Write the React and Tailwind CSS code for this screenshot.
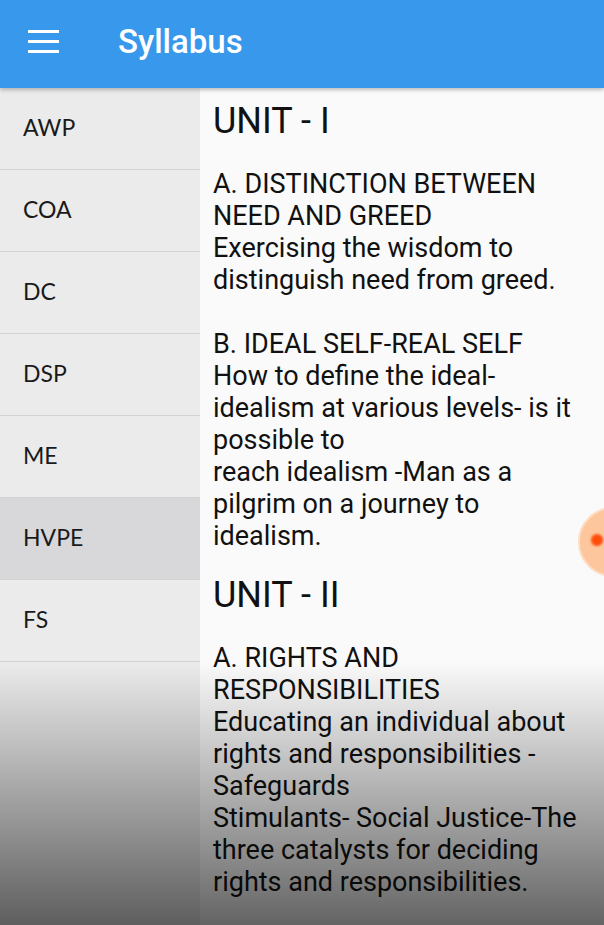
import React from 'react';

const subjects = ['AWP', 'COA', 'DC', 'DSP', 'ME', 'HVPE', 'FS'];

const units = [
  {
    title: 'UNIT - I',
    body:
      'A. DISTINCTION BETWEEN NEED AND GREED\nExercising the wisdom to distinguish need from greed.\n\nB. IDEAL SELF-REAL SELF\nHow to define the ideal-idealism at various levels- is it possible to\nreach idealism -Man as a pilgrim on a journey to idealism.',
  },
  {
    title: 'UNIT - II',
    body:
      'A. RIGHTS AND RESPONSIBILITIES\nEducating an individual about rights and responsibilities - Safeguards\nStimulants- Social Justice-The three catalysts for deciding rights and responsibilities.',
  },
];

function Hamburger() {
  return (
    <svg width="31" height="23" viewBox="0 0 31 23" className="block">
      <rect x="0" y="0" width="31" height="3" fill="white" />
      <rect x="0" y="10" width="31" height="3" fill="white" />
      <rect x="0" y="20" width="31" height="3" fill="white" />
    </svg>
  );
}

export default function App() {
  const selected = 'HVPE';

  return (
    <div className="relative w-[604px] h-[925px] overflow-hidden bg-[#fafafa] flex flex-col font-['Roboto',sans-serif]">
      {/* top bar */}
      <header className="relative z-10 h-[88px] shrink-0 bg-[#3898ec] flex items-center pb-[5px] shadow-[0_2px_4px_rgba(0,0,0,0.25)]">
        <div className="ml-[28px] w-[31px]">
          <Hamburger />
        </div>
        <h1 className="ml-[59px] text-white text-[33px] font-medium leading-none">Syllabus</h1>
      </header>

      <div className="flex flex-1 min-h-0">
        {/* subject list */}
        <aside className="w-[200px] shrink-0 bg-[#ebebeb]">
          {subjects.map((s) => (
            <div
              key={s}
              className={
                'h-[82px] flex items-center pl-[23px] pb-[2px] border-b border-[#d2d2d2] text-[23px] text-[#1a1a1a] font-["Lato",sans-serif] ' +
                (s === selected ? 'bg-[#d8d7da]' : '')
              }
            >
              {s}
            </div>
          ))}
        </aside>

        {/* syllabus text */}
        <main className="flex-1 pl-[13px] pr-[14px] pt-[12px] text-[#111]">
          {units.map((u, i) => (
            <section key={u.title} className={i > 0 ? 'mt-[22px]' : ''}>
              <h2 className="text-[36px] leading-[42px]">{u.title}</h2>
              <p className="mt-[26px] text-[27px] leading-[32px] whitespace-pre-line">{u.body}</p>
            </section>
          ))}
        </main>
      </div>

      {/* floating touch indicator */}
      <div className="absolute left-[578px] top-[507px] w-[70px] h-[70px] rounded-full bg-[#fdc69c] border-2 border-[#fedcc2]" />
      <div className="absolute left-[591px] top-[534px] w-[12px] h-[12px] rounded-full bg-[#ff4d0a] blur-[1px]" />

      {/* bottom fade */}
      <div className="pointer-events-none absolute left-0 right-0 top-[662px] bottom-0 bg-gradient-to-b from-transparent to-black/60" />
    </div>
  );
}
